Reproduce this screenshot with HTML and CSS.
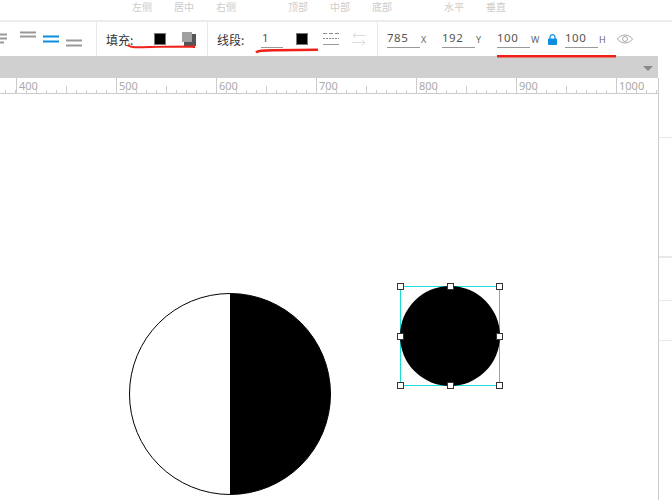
FILE: index.html
```html
<!DOCTYPE html>
<html>
  <head>
    <title>Editor</title>
    <link rel="stylesheet" href="styles.css">
  </head>
  <body>
    <div id="labels">
      <span>左侧</span><span>居中</span><span>右侧</span>
      <span class="group">顶部</span><span>中部</span><span>底部</span>
      <span class="group">水平</span><span>垂直</span>
    </div>

    <div id="toolbar">
      <div class="section aligns">
        <svg width="96" height="34" viewBox="0 0 96 34">
          <path d="M0 12.5H7M0 16.5H7M0 20.5H4" stroke="#999" stroke-width="2"/>
          <path d="M20 10.5H36M20 14.5H36" stroke="#999" stroke-width="2"/>
          <path d="M43 14.5H59M43 19.5H59" stroke="#0a8fe0" stroke-width="2"/>
          <path d="M66 18.5H82M66 23.5H82" stroke="#999" stroke-width="2"/>
        </svg>
      </div>
      <div class="section fill">
        <span class="label">填充:</span>
        <span class="swatch"></span>
        <svg class="shadow" width="14" height="14" viewBox="0 0 14 14">
          <rect x="2" y="2" width="12" height="12" fill="#555"/>
          <rect width="10" height="10" fill="#a0a0a0"/>
        </svg>
      </div>
      <div class="section stroke">
        <span class="label">线段:</span>
        <span class="field line-width">1</span>
        <span class="swatch"></span>
        <svg class="dashes" width="16" height="14" viewBox="0 0 16 14">
          <path d="M0 1.5H16" stroke="#888" stroke-dasharray="4 2"/>
          <path d="M0 6.5H16" stroke="#888" stroke-dasharray="2 1"/>
          <path d="M0 12.5H16" stroke="#999"/>
        </svg>
        <svg class="arrows" width="14" height="14" viewBox="0 0 14 14">
          <path d="M14 3.5H1M4 1L1 3.5L4 6M0 10.5H13M10 8L13 10.5L10 13" fill="none" stroke="#ddd"/>
        </svg>
      </div>
      <div class="section sizes">
        <span class="field">785</span><span class="unit">X</span>
        <span class="field">192</span><span class="unit">Y</span>
        <span class="field">100</span><span class="unit">W</span>
        <svg class="lock" width="9" height="11" viewBox="0 0 9 11">
          <path d="M2 5V3.2a2.5 2.5 0 0 1 5 0V5" fill="none" stroke="#0a8fe0" stroke-width="1.2"/>
          <rect y="4.5" width="9" height="6.5" rx="1" fill="#0a8fe0"/>
        </svg>
        <span class="field">100</span><span class="unit">H</span>
        <svg class="eye" width="16" height="10" viewBox="0 0 16 10">
          <path d="M.5 5C4 -.3 12 -.3 15.5 5C12 10.300 4 10.300 .5 5Z" fill="none" stroke="#aaa"/>
          <circle cx="8" cy="5" r="2.500" fill="none" stroke="#aaa"/>
        </svg>
      </div>
    </div>

    <div id="main">
      <div id="work">
        <div id="greybar"><span class="caret"></span></div>
        <div id="ruler">
          <span class="mark first"></span>
          <span class="mark">400</span><span class="mark">500</span><span class="mark">600</span>
          <span class="mark">700</span><span class="mark">800</span><span class="mark">900</span>
          <span class="mark">1000</span>
        </div>
        <div id="canvas">
          <svg class="halfmoon" width="204" height="204" viewBox="0 0 204 204">
            <circle cx="102" cy="102" r="100.500" fill="#fff" stroke="#000" stroke-width="1"/>
            <path d="M102 1.500A100.500 100.500 0 0 1 102 202.500Z" fill="#000"/>
          </svg>
          <div class="selection">
            <div class="dot"></div>
            <i class="handle tl"></i><i class="handle tc"></i><i class="handle tr"></i>
            <i class="handle ml"></i><i class="handle mr"></i>
            <i class="handle bl"></i><i class="handle bc"></i><i class="handle br"></i>
          </div>
        </div>
      </div>
      <div id="side">
        <div class="row r1"></div>
        <div class="row r2"></div>
        <div class="row r3"></div>
        <div class="row r4"></div>
      </div>
    </div>

    <!-- red marker scribbles on top of the screenshot -->
    <svg id="scribbles" width="672" height="60" viewBox="0 0 672 60">
      <path d="M128 45.500C131 47.500 135 47.500 150 47C165 46.500 180 46.500 194 46.500L194 48" fill="none" stroke="#f0201a" stroke-width="2"/>
      <path d="M256 52.500C258 50.500 262 50.500 275 50.300C290 50 305 49.800 318 49.800" fill="none" stroke="#f0201a" stroke-width="2.500"/>
      <path d="M497 56.300H616" fill="none" stroke="#f0201a" stroke-width="2.500"/>
    </svg>
  </body>
</html>
```

FILE: styles.css
```css
* { box-sizing: border-box; }

html, body { height: 100%; }

body {
  margin: 0;
  background: #fff;
  overflow: hidden;
  font-family: "Noto Sans", "Noto Sans CJK SC", sans-serif;
  color: #444;
}

#labels {
  display: flex;
  height: 22px;
  padding-top: 2.250px;
  padding-left: 132px;
  border-bottom: 2px solid #ececec;
  font-family: "Noto Sans CJK SC", sans-serif;
  font-size: 10px;
  line-height: 10px;
  color: #ccc;
}
#labels span { width: 20px; margin-right: 22px; }
#labels span.group { margin-left: 30px; }

#toolbar { display: flex; height: 34px; }

.section {
  display: flex;
  align-items: center;
  flex: none;
  border-right: 1px solid #e8e8e8;
}
.aligns { width: 97px; }
.fill { width: 111px; padding-left: 9px; }
.stroke { width: 170px; padding-left: 9px; }
.sizes { flex: 1; padding-left: 9px; border-right: none; }

.label {
  font-family: "Noto Sans CJK SC", sans-serif;
  font-size: 12px;
  color: #333;
  width: 30px;
}

.swatch {
  width: 12px;
  height: 12px;
  background: #000;
  border: 1px solid #777;
}
.fill .swatch { margin-left: 18px; }
.shadow { margin-left: 16px; }

.field {
  align-self: flex-start;
  width: 33px;
  height: 22px;
  margin-top: 4px;
  line-height: 24px;
  border-bottom: 1px solid #999;
  font-size: 11.500px;
  letter-spacing: .5px;
  color: #555;
}
.line-width { width: 22px; margin-left: 14px; padding-left: 1px; }
.stroke .swatch { margin-left: 13px; }
.dashes { margin-left: 15px; }
.arrows { margin-left: 13px; }

.unit {
  width: 22px;
  padding-left: 1px;
  font-size: 9px;
  color: #666;
}
.lock { margin: 0 8px 0 -4px; }
.eye { margin-left: -3px; }

#main { display: flex; height: 444px; }
#work { width: 658px; flex: none; display: flex; flex-direction: column; }

#greybar {
  height: 22px;
  background: #d0d0d0;
  display: flex;
  justify-content: flex-end;
  align-items: center;
  padding-right: 5px;
}
.caret {
  width: 0;
  height: 0;
  border-left: 5px solid transparent;
  border-right: 5px solid transparent;
  border-top: 5px solid #888;
  margin-top: 3px;
}

#ruler {
  display: flex;
  height: 16px;
  border-bottom: 1px solid #ccc;
  font-size: 11px;
  line-height: 15px;
  color: #aaa;
  overflow: hidden;
}
.mark {
  flex: none;
  width: 100px;
  padding-left: 2px;
  border-left: 1px solid #ccc;
  background:
    linear-gradient(#ccc, #ccc) 49px 100% / 1px 7px no-repeat,
    repeating-linear-gradient(to right, transparent 0 9px, #ccc 9px 10px) 0 100% / 100% 3px no-repeat;
}
.mark.first {
  width: 16px;
  border-left: none;
  padding: 0;
  background: repeating-linear-gradient(to right, transparent 0 5px, #ccc 5px 6px, transparent 6px 10px) 0 100% / 100% 3px no-repeat;
}

#canvas { position: relative; flex: 1; background: #fff; }

.halfmoon { position: absolute; left: 128px; top: 198px; }

.selection {
  position: absolute;
  left: 400px;
  top: 192px;
  width: 100px;
  height: 100px;
  border: 1px solid #1cdcdc;
}
.dot {
  position: absolute;
  inset: -1px;
  background: #000;
  border-radius: 50%;
}
.handle {
  position: absolute;
  width: 7px;
  height: 7px;
  background: #fff;
  border: 1px solid #333;
}
.tl, .tc, .tr { top: -4px; }
.ml, .mr { top: 46px; }
.bl, .bc, .br { top: 95px; }
.tl, .ml, .bl { left: -4px; }
.tc, .bc { left: 46px; }
.tr, .mr, .br { left: 95px; }

#side { flex: 1; margin-top: 22px; border-left: 1px solid #ccc; display: flex; flex-direction: column; }
.row { flex: none; border-bottom: 1px solid #e8e8e8; }
.r1 { height: 60px; }
.r2 { height: 120px; border-bottom-width: 2px; }
.r3 { height: 43px; }
.r4 { height: 40px; }

#scribbles { position: absolute; left: 0; top: 0; }
```
